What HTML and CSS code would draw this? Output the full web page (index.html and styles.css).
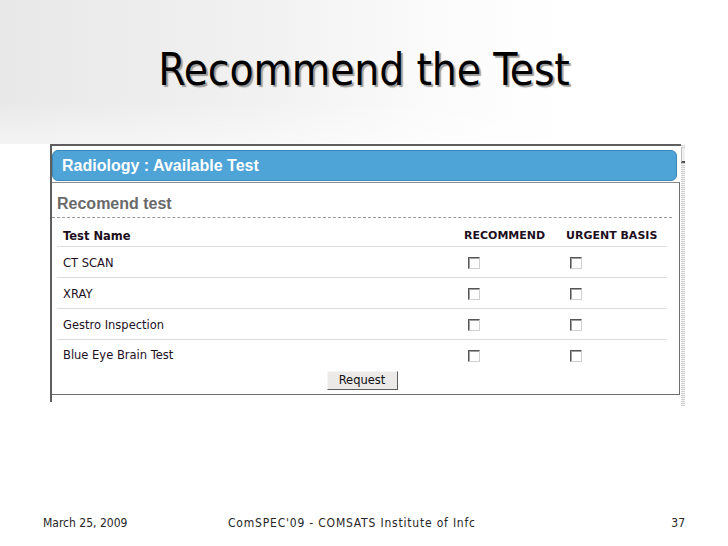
FILE: index.html
```html
<!DOCTYPE html>
<html>
<head>
<meta charset="utf-8">
<title>Recommend the Test</title>
<link rel="stylesheet" href="styles.css">
</head>
<body>
<div class="slide">
  <header class="title-band">
    <h1 class="title">Recommend the Test</h1>
  </header>

  <div class="shot-row">
    <div class="shot">
      <div class="bar">Radiology : Available Test</div>
      <div class="panel">
        <div class="panel-title">Recomend test</div>
        <table class="tests">
          <colgroup>
            <col class="c-name">
            <col class="c-rec">
            <col class="c-urg">
          </colgroup>
          <thead>
            <tr><th>Test Name</th><th>RECOMMEND</th><th>URGENT BASIS</th></tr>
          </thead>
          <tbody>
            <tr><td>CT SCAN</td><td><span class="cb"></span></td><td><span class="cb"></span></td></tr>
            <tr><td>XRAY</td><td><span class="cb"></span></td><td><span class="cb"></span></td></tr>
            <tr><td>Gestro Inspection</td><td><span class="cb"></span></td><td><span class="cb"></span></td></tr>
            <tr class="last"><td>Blue Eye Brain Test</td><td><span class="cb"></span></td><td><span class="cb"></span></td></tr>
          </tbody>
        </table>
        <div class="actions"><button class="btn" type="button">Request</button></div>
      </div>
    </div>
    <div class="scroll"><span class="scroll-arrow"></span></div>
  </div>

  <footer class="foot">
    <span class="foot-date">March 25, 2009</span>
    <span class="foot-mid">ComSPEC'09 - COMSATS Institute of Infc</span>
    <span class="foot-num">37</span>
  </footer>
</div>
</body>
</html>
```

FILE: styles.css
```css
* { box-sizing: border-box; }

html, body {
  margin: 0;
  padding: 0;
  background: #fff;
}

.slide {
  width: 728px;
  height: 546px;
  display: flex;
  flex-direction: column;
  background: #fff;
  overflow: hidden;
}

.title-band {
  height: 144px;
  padding-top: 44px;
  background:
    linear-gradient(180deg, rgba(255,255,255,0) 70%, rgba(255,255,255,0.5) 100%),
    linear-gradient(90deg, #e8e8e8 0%, #f1f1f1 35%, #fbfbfb 60%, #ffffff 78%);
  border-bottom-right-radius: 75% 20px;
}

.title {
  margin: 0;
  text-align: center;
  font-family: "DejaVu Sans Condensed", "DejaVu Sans", sans-serif;
  font-weight: normal;
  font-size: 44px;
  line-height: 52px;
  color: #000;
  letter-spacing: -0.2px;
  text-shadow: 2px 2px 1px #9c9c9c;
}

.shot-row {
  display: flex;
  margin-left: 50px;
  height: 261px;
}

.shot {
  width: 631px;
  height: 258px;
  border-top: 2px solid #5e5e5e;
  border-left: 2px solid #5e5e5e;
  padding-top: 4px;
}

.bar {
  width: 625px;
  height: 31px;
  background: #4ea3d7;
  border: 1px solid #3d86b8;
  border-radius: 6px;
  color: #fff;
  font-family: "Liberation Sans", Arial, sans-serif;
  font-weight: bold;
  font-size: 16px;
  line-height: 29px;
  padding-left: 9px;
}

.panel {
  margin-top: 1px;
  width: 628px;
  height: 213px;
  border-top: 1px solid #8a8a8a;
  border-right: 1px solid #6f6f6f;
  border-bottom: 1px solid #6f6f6f;
  padding-top: 11px;
}

.panel-title {
  font-family: "Liberation Sans", Arial, sans-serif;
  font-weight: bold;
  font-size: 16px;
  line-height: 20px;
  color: #6a6a6a;
  padding-left: 5px;
  padding-bottom: 3px;
  margin-right: 7px;
  border-bottom: 1px dashed #9a9a9a;
}

.tests {
  margin-left: 5px;
  width: 610px;
  table-layout: fixed;
  border-collapse: collapse;
  font-family: "DejaVu Sans", Verdana, sans-serif;
  color: #1e0f1e;
}

.c-name { width: 401px; }
.c-rec { width: 102px; }
.c-urg { width: 107px; }

.tests th {
  text-align: left;
  font-size: 11px;
  font-weight: bold;
  line-height: 14px;
  padding: 11px 0 3px 6px;
  border-bottom: 1px solid #dcdcdc;
  white-space: nowrap;
}

.tests th:first-child {
  font-size: 11.5px;
}

.tests td {
  height: 31px;
  padding: 1px 0 0 6px;
  font-size: 11.5px;
  line-height: 14px;
  vertical-align: middle;
  border-bottom: 1px solid #dcdcdc;
}

.tests tr.last td {
  border-bottom: none;
  height: 30px;
}

.cb {
  display: inline-block;
  width: 12px;
  height: 12px;
  margin-left: 4px;
  vertical-align: middle;
  background: #fff;
  border: 1px solid;
  border-color: #555 #d0d0d0 #d0d0d0 #555;
  box-shadow: inset 1px 1px 0 #a0a0a0;
}

.actions {
  display: flex;
  justify-content: center;
  margin-left: 5px;
  width: 610px;
  padding-top: 1px;
}

.btn {
  width: 71px;
  height: 19px;
  padding: 0;
  background: #ebeae8;
  border: 1px solid;
  border-color: #f6f6f6 #5c5c5c #5c5c5c #f6f6f6;
  border-radius: 0;
  font-family: "DejaVu Sans", Verdana, sans-serif;
  font-size: 11.5px;
  line-height: 16px;
  color: #111;
}

.scroll {
  width: 4px;
  height: 261px;
  margin-top: 1px;
  background: repeating-linear-gradient(0deg, #cfcfcf 0 1px, #f4f4f4 1px 2px);
  position: relative;
}

.scroll-arrow {
  position: absolute;
  left: 0;
  top: 3px;
  width: 4px;
  height: 15px;
  background: #f0f0f0;
  border-left: 1px solid #bdbdbd;
  border-bottom: 2px solid #555;
}

.foot {
  margin-top: auto;
  display: flex;
  align-items: center;
  padding: 0 43px 15px 43px;
  font-family: "DejaVu Sans Condensed", "DejaVu Sans", sans-serif;
  font-size: 12px;
  line-height: 16px;
  color: #262626;
}

.foot-date {
  width: 185px;
  white-space: nowrap;
}

.foot-mid {
  width: 247px;
  overflow: hidden;
  white-space: nowrap;
  letter-spacing: 0.8px;
}

.foot-num {
  margin-left: auto;
}
```
